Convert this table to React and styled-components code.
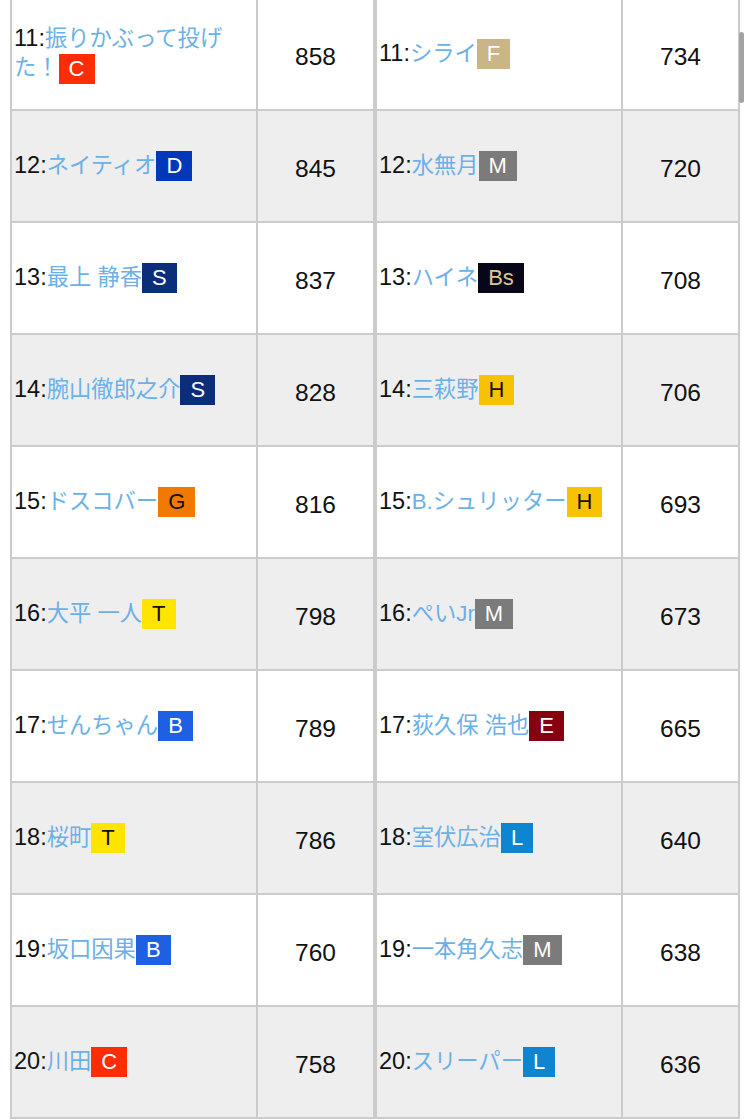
import React from 'react';
import styled, { createGlobalStyle } from 'styled-components';

const GlobalStyle = createGlobalStyle`
  body {
    margin: 0;
    background: #fff;
    font-family: "Liberation Sans", "Noto Sans CJK JP", sans-serif;
    overflow: hidden;
  }
`;

const teams = {
  C: { bg: '#ff2d06', fg: '#fff' },
  F: { bg: '#c9b585', fg: '#fff' },
  D: { bg: '#0238b8', fg: '#fff' },
  M: { bg: '#7b7b7b', fg: '#fff' },
  S: { bg: '#0b2d7a', fg: '#fff' },
  Bs: { bg: '#070719', fg: '#dcc88e' },
  H: { bg: '#f7c300', fg: '#111' },
  G: { bg: '#f07a00', fg: '#111' },
  T: { bg: '#ffe400', fg: '#111' },
  B: { bg: '#1f5fe2', fg: '#fff' },
  E: { bg: '#870012', fg: '#fff' },
  L: { bg: '#0d85d0', fg: '#fff' },
};

const leftRows = [
  [11, '振りかぶって投げた！', 'C', 858],
  [12, 'ネイティオ', 'D', 845],
  [13, '最上 静香', 'S', 837],
  [14, '腕山徹郎之介', 'S', 828],
  [15, 'ドスコバー', 'G', 816],
  [16, '大平 一人', 'T', 798],
  [17, 'せんちゃん', 'B', 789],
  [18, '桜町', 'T', 786],
  [19, '坂口因果', 'B', 760],
  [20, '川田', 'C', 758],
];

const rightRows = [
  [11, 'シライ', 'F', 734],
  [12, '水無月', 'M', 720],
  [13, 'ハイネ', 'Bs', 708],
  [14, '三萩野', 'H', 706],
  [15, 'B.シュリッター', 'H', 693],
  [16, 'ぺいJr', 'M', 673],
  [17, '荻久保 浩也', 'E', 665],
  [18, '室伏広治', 'L', 640],
  [19, '一本角久志', 'M', 638],
  [20, 'スリーパー', 'L', 636],
];

const Page = styled.div`
  display: flex;
  padding-left: 10px;
  width: 730px;
  margin-top: -3px;
`;

const Table = styled.div`
  flex: 1;
  border: 2px solid #cbcbcb;
  border-bottom: none;
`;

const Row = styled.div`
  display: grid;
  grid-template-columns: 1fr 115px;
  height: 110px;
  border-bottom: 2px solid #cbcbcb;
  background: ${p => (p.$shade ? '#eeeeee' : '#fff')};
`;

const NameCell = styled.div`
  display: flex;
  align-items: center;
  padding-left: 2px;
  border-right: 2px solid #cbcbcb;
  font-size: 23.5px;
  line-height: 29px;
  color: #111;
`;

const Name = styled.span`
  color: #6cb0e8;
  font-size: 22.3px;
`;

const Badge = styled.span`
  display: inline-block;
  padding: 0 10px;
  height: 30px;
  line-height: 30px;
  vertical-align: middle;
  background: ${p => p.$bg};
  color: ${p => p.$fg};
  font-size: 22px;
`;

const Score = styled.div`
  display: flex;
  align-items: center;
  justify-content: center;
  padding-top: 6px;
  font-size: 24.5px;
  color: #111;
`;

const Scrollbar = styled.div`
  position: fixed;
  top: 32px;
  left: 739px;
  width: 5px;
  height: 71px;
  border-radius: 3px;
  background: #a3a3a3;
`;

function RankTable({ rows }) {
  return (
    <Table>
      {rows.map(([rank, name, team, score], i) => (
        <Row key={rank} $shade={i % 2 === 1}>
          <NameCell>
            <div>
              {rank}:<Name>{name}</Name>
              <Badge $bg={teams[team].bg} $fg={teams[team].fg}>{team}</Badge>
            </div>
          </NameCell>
          <Score>{score}</Score>
        </Row>
      ))}
    </Table>
  );
}

export default function App() {
  return (
    <>
      <GlobalStyle />
      <Page>
        <RankTable rows={leftRows} />
        <RankTable rows={rightRows} />
      </Page>
      <Scrollbar />
    </>
  );
}
